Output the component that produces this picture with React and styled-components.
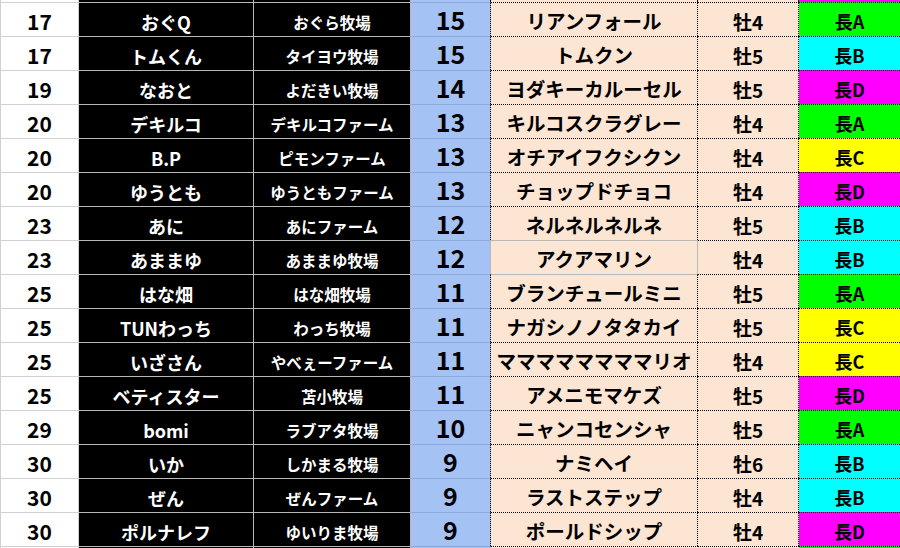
import React from "react";
import styled, { createGlobalStyle, css } from "styled-components";

const Global = createGlobalStyle`
  html, body { margin: 0; padding: 0; background: #ffffff; }
  body { font-family: "Noto Sans CJK JP", "Noto Sans", sans-serif; overflow: hidden; }
`;

const COLS = "79px 175px 157px 80px 207px 101px 101px";

const Sheet = styled.div`
  width: 900px;
  height: 548px;
  overflow: hidden;
  display: flex;
  flex-direction: column;
`;

const Row = styled.div`
  display: grid;
  grid-template-columns: ${COLS};
  height: ${(p) => p.$h || 34}px;
  flex: none;
`;

const G_LIGHT = "#d0d0d0";
const G_DARK = "#b8b8b8";
const BLUE_LINE = "#8fabdc";
const DOT = "1px dotted #000";

const Cell = styled.div`
  box-sizing: border-box;
  display: flex;
  align-items: center;
  justify-content: center;
  white-space: nowrap;
  overflow: hidden;
  font-weight: 700;
  line-height: 1;
`;

const RankCell = styled(Cell)`
  background: #ffffff;
  color: #000;
  border-left: 1px solid ${G_LIGHT};
  border-right: 1px solid ${G_LIGHT};
  border-top: 1px solid ${G_LIGHT};
  font-size: 21px;
  padding-top: 4px;
`;

const NameCell = styled(Cell)`
  background: #000;
  color: #fff;
  border-right: 1px solid ${G_DARK};
  border-top: 1px solid ${G_DARK};
  font-size: 18px;
  padding-top: 4px;
`;

const FarmCell = styled(Cell)`
  background: #000;
  color: #fff;
  border-right: 1px solid ${G_DARK};
  border-top: 1px solid ${G_DARK};
  font-size: 15.5px;
  padding-top: 6px;
`;

const ScoreCell = styled(Cell)`
  background: #a4c2f4;
  color: #000;
  border-right: ${(p) => (p.$solid ? `1px solid ${G_DARK}` : DOT)};
  border-top: 1px solid ${BLUE_LINE};
  font-size: 25px;
  padding-top: 0px;
`;

const HorseCell = styled(Cell)`
  background: #fce5d3;
  color: #000;
  border-right: ${(p) => (p.$solid ? `1px solid ${G_DARK}` : DOT)};
  border-top: ${(p) => (p.$solidTop ? `1px solid ${G_DARK}` : DOT)};
  font-size: 19.5px;
  padding-top: 3px;
`;

const SexCell = styled(Cell)`
  background: #fce5d3;
  color: #000;
  border-right: ${DOT};
  border-top: ${DOT};
  font-size: 19px;
  padding-top: 3px;
`;

const tagColors = {
  A: "#00ff00",
  B: "#00ffff",
  C: "#ffff00",
  D: "#ff00ff",
};

const TagCell = styled(Cell)`
  background: ${(p) => tagColors[p.$tag]};
  color: #000;
  border-top: ${DOT};
  font-size: 18px;
  padding-top: 3px;
`;

const rows = [
  ["17", "おぐQ", "おぐら牧場", "15", "リアンフォール", "牡4", "A"],
  ["17", "トムくん", "タイヨウ牧場", "15", "トムクン", "牡5", "B"],
  ["19", "なおと", "よだきい牧場", "14", "ヨダキーカルーセル", "牡5", "D"],
  ["20", "デキルコ", "デキルコファーム", "13", "キルコスクラグレー", "牡4", "A"],
  ["20", "B.P", "ピモンファーム", "13", "オチアイフクシクン", "牡4", "C"],
  ["20", "ゆうとも", "ゆうともファーム", "13", "チョップドチョコ", "牡4", "D"],
  ["23", "あに", "あにファーム", "12", "ネルネルネルネ", "牡5", "B"],
  ["23", "あままゆ", "あままゆ牧場", "12", "アクアマリン", "牡4", "B"],
  ["25", "はな畑", "はな畑牧場", "11", "ブランチュールミニ", "牡5", "A"],
  ["25", "TUNわっち", "わっち牧場", "11", "ナガシノノタタカイ", "牡5", "C"],
  ["25", "いざさん", "やべぇーファーム", "11", "ママママママママリオ", "牡4", "C"],
  ["25", "ベティスター", "苫小牧場", "11", "アメニモマケズ", "牡5", "D"],
  ["29", "bomi", "ラブアタ牧場", "10", "ニャンコセンシャ", "牡5", "A"],
  ["30", "いか", "しかまる牧場", "9", "ナミヘイ", "牡6", "B"],
  ["30", "ぜん", "ぜんファーム", "9", "ラストステップ", "牡4", "B"],
  ["30", "ポルナレフ", "ゆいりま牧場", "9", "ポールドシップ", "牡4", "D"],
];

function PeekRow({ h, tag, top }) {
  return (
    <Row $h={h}>
      <RankCell style={top ? { borderTop: "none" } : undefined} />
      <NameCell style={top ? { borderTop: "none" } : undefined} />
      <FarmCell style={top ? { borderTop: "none" } : undefined} />
      <ScoreCell style={top ? { borderTop: "none" } : undefined} />
      <HorseCell style={top ? { borderTop: "none" } : undefined} />
      <SexCell style={top ? { borderTop: "none" } : undefined} />
      <TagCell $tag={tag} style={top ? { borderTop: "none" } : undefined} />
    </Row>
  );
}

export default function App() {
  return (
    <>
      <Global />
      <Sheet>
        <PeekRow h={2} tag="D" top />
        {rows.map((r, i) => {
          const special = i === 7;
          const afterSpecial = i === 8;
          return (
            <Row key={i}>
              <RankCell>{r[0]}</RankCell>
              <NameCell>{r[1]}</NameCell>
              <FarmCell>{r[2]}</FarmCell>
              <ScoreCell $solid={special}>{r[3]}</ScoreCell>
              <HorseCell $solid={special} $solidTop={special || afterSpecial}>
                {r[4]}
              </HorseCell>
              <SexCell>{r[5]}</SexCell>
              <TagCell $tag={r[6]}>長{r[6]}</TagCell>
            </Row>
          );
        })}
        <PeekRow h={4} tag="A" />
      </Sheet>
    </>
  );
}
